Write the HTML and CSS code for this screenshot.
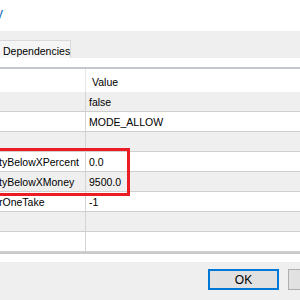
FILE: index.html
```html
<!DOCTYPE html>
<html lang="en">
<head>
    <meta charset="UTF-8">
    <title>Properties</title>
    <link rel="stylesheet" href="styles.css">
</head>
<body>
    <div class="title"><span>y</span></div>

    <div class="tabs">
        <div class="tab">Dependencies</div>
    </div>

    <div class="grid">
        <div class="row head">
            <div class="name"></div>
            <div class="value">Value</div>
        </div>
        <div class="row alt">
            <div class="name"></div>
            <div class="value">false</div>
        </div>
        <div class="row">
            <div class="name"></div>
            <div class="value">MODE_ALLOW</div>
        </div>
        <div class="row alt">
            <div class="name"></div>
            <div class="value"></div>
        </div>
        <div class="row">
            <div class="name">tyBelowXPercent</div>
            <div class="value">0.0</div>
        </div>
        <div class="row alt">
            <div class="name">tyBelowXMoney</div>
            <div class="value">9500.0</div>
        </div>
        <div class="row">
            <div class="name">rOneTake</div>
            <div class="value">-1</div>
        </div>
        <div class="row alt">
            <div class="name"></div>
            <div class="value"></div>
        </div>
        <div class="row">
            <div class="name"></div>
            <div class="value"></div>
        </div>
        <!-- highlight drawn over the two rows -->
        <div class="mark"></div>
    </div>

    <div class="footer">
        <button class="btn default">OK</button>
        <button class="btn"></button>
    </div>
</body>
</html>
```

FILE: styles.css
```css
body {
    margin: 0;
    background: #fff;
    font-family: 'Liberation Sans', Arial, sans-serif;
    font-size: 10.5px;
    color: #000;
    overflow: hidden;
}
.title {
    height: 31px;
    box-sizing: border-box;
    padding-top: 5px;
    font-size: 14px;
    color: #1c6fc0;
}
.title span {
    display: inline-block;
    margin-left: -4px;
}
.tabs {
    height: 27px;
    box-sizing: border-box;
    padding-top: 9px;
    background: #efefef;
    display: flex;
}
.tab {
    width: 72px;
    height: 18px;
    box-sizing: border-box;
    margin-left: -1px;
    padding: 4px 0 0 3px;
    background: #f5f5f5;
    border: 1px solid #d9d9d9;
    border-bottom: none;
    white-space: nowrap;
}
.grid {
    position: relative;
    margin-top: 9px;
    border-top: 2px solid #c3c7cb;
    border-bottom: 2px solid #c8cacc;
}
.row {
    display: flex;
    height: 20px;
    box-sizing: border-box;
    border-bottom: 1px solid #cfcfcf;
}
.row:last-of-type {
    border-bottom: none;
}
.row.head {
    height: 23px;
    border-bottom: none;
}
.row.alt {
    background: #efefef;
}
.name {
    width: 87px;
    flex: none;
    box-sizing: border-box;
    border-right: 1px solid #d4d4d4;
    margin-left: -1px;
    padding-top: 4px;
    white-space: nowrap;
    overflow: hidden;
}
.head .name {
    border-right-color: #e6e6e6;
}
.value {
    flex: 1;
    padding: 4px 0 0 3px;
    white-space: nowrap;
}
.head .value {
    padding: 7px 0 0 6px;
}
.mark {
    position: absolute;
    left: -4px;
    top: 79px;
    width: 134px;
    height: 48px;
    box-sizing: border-box;
    border: 3px solid #ec1c24;
}
.footer {
    margin-top: 8px;
    height: 38px;
    background: #efefef;
    display: flex;
    align-items: flex-start;
    padding: 7px 0 0 208px;
    gap: 9px;
}
.btn {
    width: 71px;
    height: 21px;
    flex: none;
    background: #e1e1e1;
    border: 1px solid #adadad;
    font-family: 'Liberation Sans', Arial, sans-serif;
    font-size: 12px;
    color: #000;
    padding: 0;
}
.btn.default {
    border: 2px solid #0078d7;
}
```
